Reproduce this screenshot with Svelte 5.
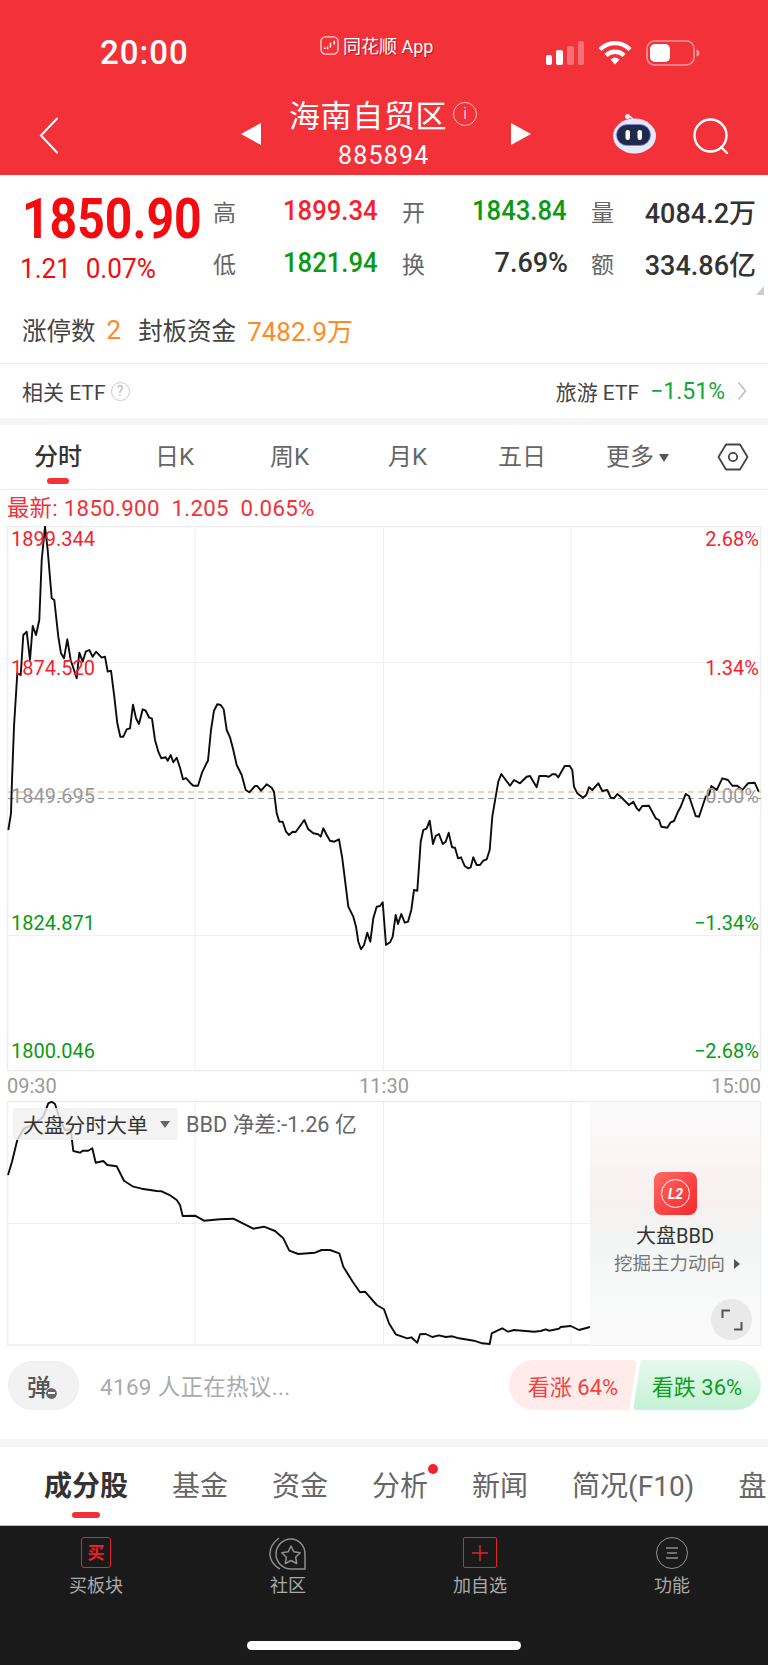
<script lang="ts">
	type Seg = [number, number, number[]];

	// traced from crops: [originX, originY, x,y pairs at 3x]
	const priceSegs: Seg[] = [
		[0, 780, [25,150, 33,100, 36,0]],
		[0, 500, [42,680,52,520,62,525,70,405,80,395,90,480,98,378,108,405,118,360,125,180,135,80,143,150,155,295,163,300,175,410,183,460,192,475,202,418,212,480,230,535,238,458,248,485,257,455,268,450,278,470,288,455,305,473,315,470,323,515,333,512,343,590,352,670,361,710,370,710,380,688,390,685,399,614,408,655,417,672,428,628,437,632,448,653,456,656,465,720,475,755,484,775,497,772,503,782,512,765,520,787,530,773,540,803,549,838,558,834,570,848,580,857,594,857,606,818,618,793,624,782,633,690,642,632,652,613,662,615,671,628,680,690,690,712,700,750,710,795,725,825,737,870,748,877,765,858,772,858,783,872,800,853,815,863,822,875]],
		[0, 780, [830,100,838,125,848,125,858,155,867,165,878,155,887,156,913,120,925,148,940,160,955,163,962,170,970,145,980,165,990,182,1003,185,1017,178,1027,235,1045,380,1060,410,1068,440,1075,485,1083,508,1092,495,1102,458,1111,485,1120,415,1130,380,1140,378,1148,367]],
		[384, 780, [6,495,18,487,26,470,35,405,42,432,52,402,62,428,72,425,82,390,90,330,100,332,110,185,118,150,128,145,137,122,147,192,155,168,165,162,176,192,185,185,194,158,204,202,213,203,222,235,231,232,242,258,252,265,260,262,268,232,278,255,288,255,298,242,308,238,317,210,325,110,335,50]],
		[384, 500, [343,845,352,822,365,840,378,857,390,840,408,850,428,830,438,828,458,862,466,828,485,828,495,830,505,823,515,823,523,832,542,798,557,798,565,810,570,860,580,880,597,893]],
		[384, 780, [607,45,615,22,625,30,643,10,655,33,670,30,680,53,690,55,700,42,715,55,735,75,748,65,758,85,765,92,775,78,795,77,815,115,825,120,832,140,850,143,860,127,870,123,882,95,890,80,905,42,915,48,935,108,945,110,965,50,975,45]],
		[384, 500, [982,858,998,870,1015,835,1032,840,1045,857,1060,857,1075,870,1092,850,1112,848,1124,875]]
	];

	const flowSegs: Seg[] = [
		[0, 1090, [24,255,36,215,52,150,72,115,100,105,130,80,145,40,155,35,165,42,180,90,195,120,212,118,220,183,240,188,248,182,265,182,277,175,287,218,310,213,322,225,350,229,372,272,400,290,425,296,470,303,485,304,512,317,530,330,540,345,548,378,585,377,612,392,660,388,700,386,760,416,792,410,825,423,850,445,868,482,895,492,945,488,965,480,990,480,1018,490,1030,530,1058,575,1080,607,1095,605,1130,645,1152,658]],
		[384, 1090, [15,700,35,733,70,745,82,742,100,758,108,733,125,732,145,741,165,736,185,741,205,739,225,745,270,752,295,760,317,762,323,730,340,722,355,715,372,725,390,720,450,725,470,723,485,718,495,722,525,716,530,711,560,708,585,720,618,711]]
	];

	function toPoints(segs: Seg[], top: number): string {
		const out: string[] = [];
		for (const [ox, oy, pts] of segs) {
			for (let i = 0; i < pts.length; i += 2) {
				out.push(`${(ox + pts[i] / 3).toFixed(1)},${(oy + pts[i + 1] / 3 - top).toFixed(1)}`);
			}
		}
		return out.join(' ');
	}

	const pricePoints = toPoints(priceSegs, 526);
	const flowPoints = toPoints(flowSegs, 1101);

	const stats = [
		{ label: '高', value: '1899.34', tone: 'up' },
		{ label: '开', value: '1843.84', tone: 'down' },
		{ label: '量', value: '4084.2万', tone: 'flat' },
		{ label: '低', value: '1821.94', tone: 'down' },
		{ label: '换', value: '7.69%', tone: 'flat' },
		{ label: '额', value: '334.86亿', tone: 'flat' }
	];

	const periods = ['日K', '周K', '月K', '五日'];
	const subTabs = ['基金', '资金', '分析', '新闻', '简况(F10)', '盘'];

	const axis = [
		{ left: '1899.344', right: '2.68%', y: 0, tone: 'up' },
		{ left: '1874.520', right: '1.34%', y: 129, tone: 'up' },
		{ left: '1849.695', right: '0.00%', y: 257, tone: 'flat' },
		{ left: '1824.871', right: '−1.34%', y: 384, tone: 'down' },
		{ left: '1800.046', right: '−2.68%', y: 512, tone: 'down' }
	];
</script>

<div class="page">
	<header class="head">
		<div class="status">
			<span class="clock">20:00</span>
			<span class="carrier">
				<svg class="carrier-icon" viewBox="0 0 20 20" width="19" height="19">
					<rect x="1" y="1" width="18" height="18" rx="5" fill="#f33139" stroke="#ffd9d9" stroke-width="1.4" />
					<path d="M4 13h2M8 11v3M11 7v5M15 5v4" stroke="#fff" stroke-width="1.6" fill="none" />
				</svg>
				同花顺 App
			</span>
			<span class="status-icons">
				<svg width="38" height="24" viewBox="0 0 38 24">
					<rect x="0" y="14" width="6" height="10" rx="2" fill="#fff" />
					<rect x="10" y="9" width="7" height="15" rx="2" fill="#fff" />
					<rect x="21" y="5" width="7" height="19" rx="2" fill="#fff" opacity=".3" />
					<rect x="32" y="0" width="6" height="24" rx="2" fill="#fff" opacity=".3" />
				</svg>
				<svg width="34" height="25" viewBox="0 0 34 25">
					<path d="M2 9.500C10.500 1 23.500 1 32 9.500" stroke="#fff" stroke-width="4.400" fill="none" />
					<path d="M8 15.500C13 10.500 21 10.500 26 15.500" stroke="#fff" stroke-width="4.400" fill="none" />
					<path d="M12.500 19.500C15.500 16.800 18.500 16.800 21.500 19.500L17 24.500Z" fill="#fff" />
				</svg>
				<svg width="54" height="26" viewBox="0 0 54 26">
					<rect x="1" y="1" width="47" height="24" rx="7.500" fill="none" stroke="#fff" stroke-opacity=".5" stroke-width="1.600" />
					<rect x="4" y="4" width="20" height="18" rx="5" fill="#fff" />
					<path d="M50.500 9.500c2 .5 3 2 3 3.500s-1 3-3 3.500z" fill="#fff" fill-opacity=".5" />
				</svg>
			</span>
		</div>
		<div class="nav">
			<svg class="back" width="20" height="37" viewBox="0 0 20 37">
				<path d="M18 1.500L2 18.500l16 17" fill="none" stroke="#fff" stroke-width="2" stroke-linecap="round" />
			</svg>
			<div class="nav-mid">
				<span class="tri tri-left"></span>
				<div class="title-block">
					<div class="title">海南自贸区<span class="info">i</span></div>
					<div class="code">885894</div>
				</div>
				<span class="tri tri-right"></span>
			</div>
			<div class="nav-right">
				<svg width="46" height="42" viewBox="0 0 46 42">
					<path d="M21 8c0-3-3-5-5-4.500" stroke="#e4e6f6" stroke-width="1.600" fill="none" />
					<circle cx="15.500" cy="3.500" r="2.500" fill="#eef0fb" />
					<ellipse cx="22.500" cy="23" rx="21.500" ry="17.500" fill="#e6e8f8" />
					<rect x="4.500" y="11.500" width="34" height="21" rx="10.500" fill="#1f2b4a" stroke="#8a7cf0" stroke-width=".8" />
					<rect x="13.500" y="17" width="4.500" height="10" rx="2.200" fill="#fff" />
					<rect x="25.500" y="17" width="4.500" height="10" rx="2.200" fill="#fff" />
				</svg>
				<svg class="search" width="36" height="38" viewBox="0 0 36 38">
					<circle cx="17.500" cy="17.500" r="16" fill="none" stroke="#fff" stroke-width="2.400" />
					<path d="M28 29l6 6" stroke="#fff" stroke-width="2.400" stroke-linecap="round" />
				</svg>
			</div>
		</div>
	</header>

	<section class="quote">
		<div class="price-col">
			<div class="price">1850.90</div>
			<div class="change"><span>1.21</span><span>0.07%</span></div>
		</div>
		<div class="stats">
			{#each stats as stat}
				<div class="stat">
					<span class="stat-label">{stat.label}</span>
					<span class="stat-value {stat.tone}">{stat.value}</span>
				</div>
			{/each}
		</div>
		<span class="corner"></span>
	</section>

	<div class="limit">
		<span>涨停数</span><span class="orange n">2</span>
		<span class="fund">封板资金</span><span class="orange">7482.9万</span>
	</div>

	<div class="etf">
		<div class="etf-left">
			相关 ETF
			<span class="help">?</span>
		</div>
		<div class="etf-right">
			<span>旅游 ETF</span>
			<span class="etf-pct">−1.51%</span>
			<svg width="10" height="20" viewBox="0 0 10 20">
				<path d="M1.500 1.500L8.500 10l-7 8.500" fill="none" stroke="#bdbdbd" stroke-width="1.500" />
			</svg>
		</div>
	</div>

	<div class="band"></div>

	<nav class="periods">
		<div class="period active">分时<span class="underline"></span></div>
		{#each periods as period}
			<div class="period">{period}</div>
		{/each}
		<div class="period more">更多<span class="more-tri"></span></div>
		<svg class="hex" width="32" height="28" viewBox="0 0 32 28">
			<path d="M9 1.500h14L30.500 14 23 26.500H9L1.500 14z" fill="none" stroke="#444" stroke-width="1.800" stroke-linejoin="round" />
			<circle cx="16" cy="14" r="4.200" fill="none" stroke="#444" stroke-width="1.800" />
		</svg>
	</nav>

	<div class="latest">最新: 1850.900&nbsp;&nbsp;1.205&nbsp;&nbsp;0.065%</div>

	<div class="chart">
		<svg class="plot" width="768" height="546" viewBox="0 0 768 546">
			<rect x="7.500" y="0.500" width="753" height="544" fill="none" stroke="#ececec" stroke-width="1.500" />
			<path d="M195 0v545M383.500 0v545M571 0v545M7 136.500h754M7 409.500h754" stroke="#efefef" stroke-width="1" />
			<path d="M8 266h753" stroke="#e8c9a0" stroke-width="1.400" stroke-dasharray="6 4" />
			<path d="M8 272.500h753" stroke="#999" stroke-width="1.200" stroke-dasharray="6 4" />
			<polyline points={pricePoints} fill="none" stroke="#0c0c0c" stroke-width="1.900" stroke-linejoin="round" />
		</svg>
		{#each axis as row}
			<span class="axis axis-left {row.tone}" style="top: {row.y}px">{row.left}</span>
			<span class="axis axis-right {row.tone}" style="top: {row.y}px">{row.right}</span>
		{/each}
	</div>

	<div class="times"><span>09:30</span><span>11:30</span><span>15:00</span></div>

	<div class="flow">
		<svg class="plot" width="768" height="245" viewBox="0 0 768 245">
			<rect x="7.500" y="0.500" width="753" height="243.500" fill="none" stroke="#ececec" stroke-width="1.500" />
			<path d="M195 0v244M383.500 0v244M571 0v244M7 122.500h754" stroke="#efefef" stroke-width="1" />
			<polyline points={flowPoints} fill="none" stroke="#0c0c0c" stroke-width="1.900" stroke-linejoin="round" />
		</svg>
		<div class="flow-head">
			<div class="pick">大盘分时大单<span class="pick-tri"></span></div>
			<span class="bbd">BBD 净差:-1.26 亿</span>
		</div>
		<div class="promo">
			<div class="l2"><span class="l2-ring">L2</span></div>
			<div class="promo-title">大盘BBD</div>
			<div class="promo-sub">挖掘主力动向<span class="promo-tri"></span></div>
			<div class="expand">
				<svg width="22" height="22" viewBox="0 0 22 22">
					<path d="M1.500 9V1.500H9M20.500 13v7.500H13" fill="none" stroke="#555" stroke-width="2" />
				</svg>
			</div>
		</div>
	</div>

	<div class="talk">
		<div class="danmu">弹<span class="danmu-off"></span></div>
		<span class="talk-text">4169 人正在热议...</span>
		<div class="votes">
			<span class="vote vote-up">看涨 64%</span>
			<span class="vote vote-down">看跌 36%</span>
		</div>
	</div>

	<div class="band band-low"></div>

	<nav class="subtabs">
		<div class="subtab first">成分股<span class="underline"></span></div>
		{#each subTabs as tab}
			<div class="subtab">{tab}{#if tab === '分析'}<span class="dot"></span>{/if}</div>
		{/each}
	</nav>

	<footer class="bar">
		<div class="actions">
			<div class="action">
				<span class="buy">买</span>
				<span>买板块</span>
			</div>
			<div class="action">
				<svg width="38" height="34" viewBox="0 0 38 34">
					<path d="M10 1C2 7 .5 12 1 18c.4 6 3 10 10 14" fill="none" stroke="#8f8f8f" stroke-width="1.500" />
					<path d="M22 2C13.500 2 7 9 7 17s6.500 15 15 15h14V17C36 9 30 2 22 2z" fill="none" stroke="#8f8f8f" stroke-width="1.500" />
					<path d="M22 9l2.800 5.800 6.400.9-4.600 4.500 1.100 6.300-5.700-3-5.700 3 1.100-6.300-4.600-4.500 6.400-.9z" fill="none" stroke="#8f8f8f" stroke-width="1.500" stroke-linejoin="round" />
				</svg>
				<span>社区</span>
			</div>
			<div class="action">
				<span class="add">
					<svg width="18" height="18" viewBox="0 0 18 18"><path d="M9 1v16M1 9h16" stroke="#e5232d" stroke-width="1.500" /></svg>
				</span>
				<span>加自选</span>
			</div>
			<div class="action">
				<span class="menu">
					<svg width="14" height="14" viewBox="0 0 14 14"><path d="M1 2h12M2 7h10M1 12h12" stroke="#8f8f8f" stroke-width="1.600" /></svg>
				</span>
				<span>功能</span>
			</div>
		</div>
		<div class="home"></div>
	</footer>
</div>

<style>
	:global(body) {
		margin: 0;
		background: #fff;
	}

	.page {
		position: relative;
		width: 768px;
		height: 1665px;
		overflow: hidden;
		font-family: Roboto, 'Noto Sans CJK SC', sans-serif;
		color: #333;
		background: #fff;
	}

	.head {
		height: 175px;
		background: #f33139;
		color: #fff;
		box-sizing: border-box;
		padding-top: 36px;
	}

	.status {
		display: flex;
		height: 30px;
		align-items: center;
		position: relative;
		padding: 0 68px 0 100px;
		justify-content: space-between;
	}

	.clock {
		font-size: 33px;
		font-weight: 500;
		line-height: 30px;
		margin-top: 3px;
		letter-spacing: 1px;
	}

	.carrier {
		position: absolute;
		left: 320px;
		top: 0;
		display: flex;
		align-items: center;
		gap: 4px;
		height: 18px;
		font-size: 18px;
		text-shadow: 1px 1px 1px rgba(120, 0, 0, 0.5);
	}

	.carrier-icon {
		flex: none;
	}

	.status-icons {
		display: flex;
		align-items: center;
		gap: 14px;
		margin-top: 3px;
	}

	.nav {
		display: flex;
		height: 109px;
		position: relative;
		margin-top: 0;
	}

	.back {
		position: absolute;
		left: 39px;
		top: 51px;
	}

	.nav-mid {
		position: absolute;
		left: 241px;
		top: 35px;
		width: 290px;
		display: flex;
		justify-content: space-between;
		align-items: flex-start;
	}

	.tri {
		width: 0;
		height: 0;
		margin-top: 22px;
		border-top: 11.500px solid transparent;
		border-bottom: 11.500px solid transparent;
	}

	.tri-left {
		border-right: 20px solid #fff;
	}

	.tri-right {
		border-left: 20px solid #fff;
	}

	.title-block {
		position: absolute;
		left: 48px;
		top: -2px;
		width: 200px;
	}

	.title {
		display: flex;
		align-items: center;
		font-size: 31px;
		line-height: 36px;
		letter-spacing: 0.600px;
		white-space: nowrap;
	}

	.info {
		display: inline-flex;
		width: 22px;
		height: 22px;
		margin-left: 6px;
		margin-top: -6px;
		border: 1px solid rgba(255, 255, 255, 0.7);
		border-radius: 50%;
		align-items: center;
		justify-content: center;
		font-size: 16px;
		font-weight: 300;
		letter-spacing: 0;
		line-height: 1;
	}

	.code {
		font-size: 25px;
		line-height: 28px;
		letter-spacing: 1.200px;
		margin-left: 49px;
		margin-top: 7px;
	}

	.nav-right {
		position: absolute;
		left: 612px;
		top: 47px;
		display: flex;
		align-items: flex-start;
		gap: 35px;
	}

	.search {
		margin-top: 5px;
	}

	.quote {
		position: relative;
		display: flex;
		height: 123px;
		padding-left: 22px;
		box-sizing: border-box;
	}

	.price-col {
		width: 192px;
		flex: none;
	}

	.price {
		font-size: 55px;
		font-weight: 700;
		color: #f40b10;
		line-height: 60px;
		margin-top: 14px;
		transform: scaleX(0.875);
		transform-origin: 0 50%;
		white-space: nowrap;
	}

	.change {
		display: flex;
		gap: 15px;
		margin-top: 4px;
		margin-left: -2px;
		font-size: 27px;
		line-height: 32px;
		color: #f40b10;
		transform: scaleX(0.97);
		transform-origin: 0 50%;
		white-space: nowrap;
	}

	.stats {
		display: grid;
		grid-template-columns: 164px 164px 163px;
		grid-auto-rows: 52px;
		column-gap: 25px;
		padding-top: 10px;
	}

	.stat {
		display: flex;
		align-items: center;
		justify-content: space-between;
		white-space: nowrap;
	}

	.stat-label {
		font-size: 23px;
		color: #666;
		margin-top: -1px;
		margin-left: -1px;
	}

	.stat-value {
		font-size: 27px;
		font-weight: 500;
		transform: scaleX(0.95);
		transform-origin: 100% 50%;
	}

	.stat-value.flat {
		transform: none;
		margin-right: -1px;
	}

	.up {
		color: #f5222d;
	}

	.down {
		color: #0a9a12;
	}

	.flat {
		color: #333;
	}

	.corner {
		position: absolute;
		right: 4px;
		bottom: 3px;
		width: 0;
		height: 0;
		border-left: 8px solid transparent;
		border-bottom: 9px solid #ccc;
	}

	.limit {
		display: flex;
		align-items: center;
		height: 66px;
		box-sizing: border-box;
		padding-left: 22px;
		font-size: 24.500px;
		color: #444;
		border-bottom: 1px solid #ececec;
		white-space: nowrap;
		padding-bottom: 2px;
	}

	.orange {
		color: #ff8a1f;
		font-size: 26px;
		margin-left: 11px;
	}

	.n {
		margin-right: 17px;
	}

	.etf {
		display: flex;
		justify-content: space-between;
		align-items: center;
		height: 54px;
		padding: 0 21px 0 22px;
		font-size: 21px;
		color: #444;
	}

	.etf-left,
	.etf-right {
		display: flex;
		align-items: center;
		white-space: nowrap;
	}

	.help {
		display: inline-flex;
		margin-left: 5px;
		border: 1.500px solid #ccc;
		border-radius: 50%;
		color: #bbb;
		font-size: 14px;
		align-items: center;
		justify-content: center;
		box-sizing: content-box;
		width: 17px;
		height: 17px;
	}

	.etf-pct {
		color: #14a53c;
		font-size: 23px;
		margin-left: 11px;
		margin-right: 12px;
	}

	.band {
		height: 7px;
		background: #f5f5f5;
	}

	.periods {
		position: relative;
		height: 65px;
		box-sizing: border-box;
		border-bottom: 1.500px solid #ececec;
		font-size: 24px;
		color: #666;
	}

	.period {
		position: absolute;
		top: 15px;
		line-height: 34px;
		white-space: nowrap;
	}

	.period:nth-child(1) {
		left: 34px;
		font-weight: 500;
		color: #333;
	}

	.period:nth-child(2) {
		left: 155px;
	}

	.period:nth-child(3) {
		left: 270px;
	}

	.period:nth-child(4) {
		left: 388px;
	}

	.period:nth-child(5) {
		left: 498px;
	}

	.period:nth-child(6) {
		left: 606px;
	}

	.underline {
		position: absolute;
		background: #f33139;
		border-radius: 3px;
	}

	.period .underline {
		left: 13px;
		bottom: -10px;
		width: 22px;
		height: 6px;
	}

	.more-tri {
		display: inline-block;
		margin-left: 5px;
		vertical-align: 3px;
		border-left: 5.500px solid transparent;
		border-right: 5.500px solid transparent;
		border-top: 8px solid #555;
	}

	.hex {
		position: absolute;
		left: 717px;
		top: 18px;
	}

	.latest {
		height: 36px;
		line-height: 37px;
		padding-left: 7px;
		font-size: 22.300px;
		letter-spacing: 0.300px;
		color: #f33139;
		white-space: nowrap;
	}

	.chart {
		position: relative;
		height: 546px;
	}

	.plot {
		display: block;
	}

	.axis {
		position: absolute;
		font-size: 20px;
		line-height: 26px;
		white-space: nowrap;
	}

	.axis.flat {
		color: #999;
	}

	.axis-left {
		left: 11px;
	}

	.axis-right {
		right: 9px;
	}

	.times {
		display: flex;
		justify-content: space-between;
		height: 29px;
		padding: 0 7px;
		font-size: 20px;
		line-height: 28px;
		color: #999;
	}

	.flow {
		position: relative;
		height: 260px;
	}

	.flow-head {
		position: absolute;
		left: 13px;
		top: 7px;
		display: flex;
		align-items: center;
		gap: 8px;
		font-size: 21.700px;
		color: #666;
		white-space: nowrap;
	}

	.bbd {
		margin-top: -3px;
	}

	.pick {
		display: flex;
		align-items: center;
		width: 165px;
		height: 32px;
		box-sizing: border-box;
		padding-left: 10px;
		border-radius: 3px;
		background: rgba(240, 240, 240, 0.82);
		color: #333;
		font-size: 20.800px;
	}

	.pick-tri {
		margin-left: 12px;
		border-left: 5.500px solid transparent;
		border-right: 5.500px solid transparent;
		border-top: 7px solid #666;
	}

	.promo {
		position: absolute;
		left: 590px;
		top: 1px;
		width: 170px;
		height: 243px;
		display: flex;
		flex-direction: column;
		align-items: center;
		background: linear-gradient(180deg, #fafafa 0, #fbf6f6 20%, #f9efef 38%, #f1f4f3 55%, #f5f8f7 70%, #fafafa 88%);
	}

	.l2 {
		display: flex;
		align-items: center;
		justify-content: center;
		width: 43px;
		height: 43px;
		margin-top: 70px;
		margin-left: 1px;
		border-radius: 8px;
		background: linear-gradient(135deg, #ff6a64, #f5262b);
	}

	.l2-ring {
		display: flex;
		align-items: center;
		justify-content: center;
		width: 27px;
		height: 27px;
		border: 1.500px solid #fff;
		border-radius: 50%;
		color: #fff;
		font-size: 14px;
		font-weight: 700;
		font-style: italic;
	}

	.promo-title {
		margin-top: 7px;
		font-size: 20px;
		line-height: 28px;
		color: #333;
	}

	.promo-sub {
		display: flex;
		align-items: center;
		margin-top: 1px;
		margin-left: 4px;
		font-size: 18.500px;
		line-height: 26px;
		color: #777;
		white-space: nowrap;
	}

	.promo-tri {
		margin-left: 9px;
		border-top: 5px solid transparent;
		border-bottom: 5px solid transparent;
		border-left: 6px solid #555;
	}

	.expand {
		position: absolute;
		left: 121px;
		top: 197px;
		display: flex;
		align-items: center;
		justify-content: center;
		width: 41px;
		height: 41px;
		border-radius: 50%;
		background: #e9e9e9;
	}

	.talk {
		position: absolute;
		left: 0;
		top: 1360px;
		width: 768px;
		height: 50px;
		display: flex;
		align-items: center;
	}

	.danmu {
		position: relative;
		display: flex;
		align-items: center;
		justify-content: center;
		width: 71px;
		height: 49px;
		margin-left: 8px;
		padding-right: 9px;
		box-sizing: border-box;
		border-radius: 25px;
		background: #f2f2f2;
		border: 1px solid #efefef;
		font-size: 24px;
		font-weight: 500;
		color: #555;
	}

	.danmu-off {
		position: absolute;
		left: 37px;
		top: 26px;
		width: 11px;
		height: 11px;
		display: flex;
		align-items: center;
		justify-content: center;
		border-radius: 50%;
		background: #666;
		outline: 1px solid #f2f2f2;
	}

	.danmu-off::after {
		content: '';
		width: 7px;
		height: 2px;
		background: #fff;
	}

	.talk-text {
		margin-left: 21px;
		font-size: 22.500px;
		letter-spacing: 0.300px;
		color: #aaa;
	}

	.votes {
		position: absolute;
		left: 509px;
		top: 0;
		display: flex;
		width: 252px;
		height: 50px;
	}

	.vote {
		display: flex;
		flex: none;
		width: 128px;
		align-items: center;
		justify-content: center;
		font-size: 22px;
		white-space: nowrap;
	}

	.vote-up {
		color: #f5403c;
		background: #ffecea;
		border-radius: 25px 4px 4px 25px;
		clip-path: polygon(0 0, 100% 0, 94% 100%, 0 100%);
	}

	.vote-down {
		margin-left: -4px;
		color: #0f9e1c;
		background: linear-gradient(180deg, #e7f9ef, #c4f2d4);
		border-radius: 4px 25px 25px 4px;
		clip-path: polygon(6% 0, 100% 0, 100% 100%, 0 100%);
	}

	.band-low {
		position: absolute;
		left: 0;
		width: 768px;
		top: 1439px;
		height: 8px;
	}

	.subtabs {
		position: absolute;
		left: 0;
		top: 1447px;
		width: 768px;
		height: 78px;
		display: flex;
		align-items: center;
		padding-left: 44px;
		gap: 44px;
		box-sizing: border-box;
		font-size: 28px;
		color: #666;
		overflow: hidden;
		white-space: nowrap;
	}

	.subtab {
		position: relative;
		flex: none;
		margin-top: -4px;
	}

	.subtab.first {
		font-size: 28px;
		font-weight: 700;
		color: #333;
	}

	.subtab .underline {
		left: 28px;
		bottom: -14px;
		width: 28px;
		height: 6px;
	}

	.dot {
		position: absolute;
		right: -10px;
		top: 0;
		width: 10px;
		height: 10px;
		border-radius: 50%;
		background: #f5222d;
	}

	.bar {
		position: absolute;
		left: 0;
		top: 1525px;
		width: 768px;
		height: 140px;
		background: #1a1a1a;
		border-top: 1px solid #bbb;
		box-sizing: border-box;
	}

	.actions {
		display: grid;
		grid-template-columns: repeat(4, 192px);
		padding-top: 11px;
	}

	.action {
		display: flex;
		flex-direction: column;
		align-items: center;
		height: 61px;
		justify-content: space-between;
		font-size: 18px;
		line-height: 24px;
		color: #aaa;
	}

	.buy,
	.add,
	.menu {
		display: flex;
		align-items: center;
		justify-content: center;
		box-sizing: border-box;
	}

	.buy {
		width: 30px;
		height: 31px;
		border: 1.500px solid #e5232d;
		border-radius: 3px;
		color: #e5232d;
		font-size: 17px;
		font-weight: 700;
	}

	.add {
		width: 34px;
		height: 31px;
		border: 1.500px solid #e5232d;
		border-radius: 2px;
	}

	.menu {
		width: 32px;
		height: 32px;
		border: 1.500px solid #8f8f8f;
		border-radius: 50%;
	}

	.home {
		position: absolute;
		left: 247px;
		top: 115px;
		width: 274px;
		height: 9px;
		border-radius: 5px;
		background: #fff;
	}
</style>
